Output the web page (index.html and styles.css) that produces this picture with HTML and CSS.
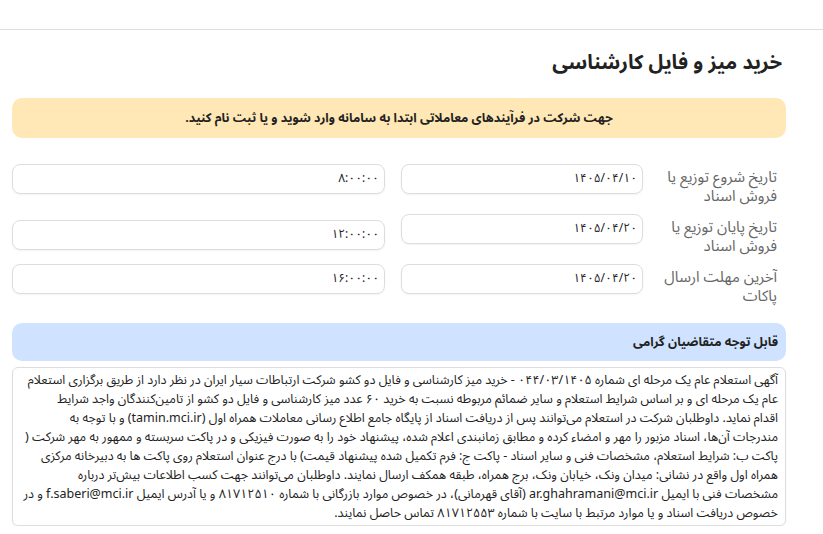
FILE: index.html
```html
<!DOCTYPE html>
<html lang="fa" dir="rtl">
<head>
    <meta charset="UTF-8">
    <meta name="viewport" content="width=device-width, initial-scale=1.0">
    <title>خرید میز و فایل کارشناسی</title>
    <link rel="stylesheet" href="styles.css">
</head>
<body>
  <div class="topbar"></div>

  <div class="page">
    <h1 class="page-title">خرید میز و فایل کارشناسی</h1>

    <div class="alert-box">جهت شرکت در فرآیندهای معاملاتی ابتدا به سامانه وارد شوید و یا ثبت نام کنید.</div>

    <div class="form-grid">
      <div class="form-row">
        <label class="field-label">تاریخ شروع توزیع یا فروش اسناد</label>
        <div class="field-box date-box">۱۴۰۵/۰۴/۱۰</div>
        <div class="field-box time-box">۸:۰۰:۰۰</div>
      </div>
      <div class="form-row">
        <label class="field-label">تاریخ پایان توزیع یا فروش اسناد</label>
        <div class="field-box date-box">۱۴۰۵/۰۴/۲۰</div>
        <div class="field-box time-box shifted">۱۲:۰۰:۰۰</div>
      </div>
      <div class="form-row">
        <label class="field-label">آخرین مهلت ارسال پاکات</label>
        <div class="field-box date-box">۱۴۰۵/۰۴/۲۰</div>
        <div class="field-box time-box">۱۶:۰۰:۰۰</div>
      </div>
    </div>

    <div class="notice-head">قابل توجه متقاضیان گرامی</div>
    <div class="notice-body">
      آگهی استعلام عام یک مرحله ای شماره ۰۴۴/۰۳/۱۴۰۵ - خرید میز کارشناسی و فایل دو کشو شرکت ارتباطات سیار ایران در نظر دارد از طریق برگزاری استعلام<br>
      عام یک مرحله ای و بر اساس شرایط استعلام و سایر ضمائم مربوطه نسبت به خرید ۶۰ عدد میز کارشناسی و فایل دو کشو از تامین‌کنندگان واجد شرایط<br>
      اقدام نماید. داوطلبان شرکت در استعلام می‌توانند پس از دریافت اسناد از پایگاه جامع اطلاع رسانی معاملات همراه اول (tamin.mci.ir) و با توجه به<br>
      مندرجات آن‌ها، اسناد مزبور را مهر و امضاء کرده و مطابق زمانبندی اعلام شده، پیشنهاد خود را به صورت فیزیکی و در پاکت سربسته و ممهور به مهر شرکت (<br>
      پاکت ب: شرایط استعلام، مشخصات فنی و سایر اسناد - پاکت ج: فرم تکمیل شده پیشنهاد قیمت) با درج عنوان استعلام روی پاکت ها به دبیرخانه مرکزی<br>
      همراه اول واقع در نشانی: میدان ونک، خیابان ونک، برج همراه، طبقه همکف ارسال نمایند. داوطلبان می‌توانند جهت کسب اطلاعات بیش‌تر درباره<br>
      مشخصات فنی با ایمیل ar.ghahramani@mci.ir (آقای قهرمانی)، در خصوص موارد بازرگانی با شماره ۸۱۷۱۲۵۱۰ و یا آدرس ایمیل f.saberi@mci.ir و در<br>
      خصوص دریافت اسناد و یا موارد مرتبط با سایت با شماره ۸۱۷۱۲۵۵۳ تماس حاصل نمایند.
    </div>
  </div>
</body>
</html>
```

FILE: styles.css
```css
body {
    margin: 0;
    padding: 0;
    background-color: #fff;
    font-family: "Noto Sans Arabic", "Noto Naskh Arabic", "DejaVu Sans", sans-serif;
    color: #222;
}
.topbar {
    height: 29px;
    border-bottom: 1px solid #ddd;
}
.page {
    width: 774px;
    margin-right: 37px;
}
.page-title {
    margin: 18px 0 0 0;
    padding-right: 4px;
    height: 50px;
    line-height: 30px;
    font-size: 20px;
    font-weight: bold;
    color: #222;
}
.alert-box {
    background-color: #ffe8b5;
    border-radius: 10px;
    height: 40px;
    line-height: 40px;
    text-align: center;
    font-size: 12.5px;
    font-weight: bold;
    color: #222;
}
.form-grid {
    margin-top: 26px;
    display: flex;
    flex-direction: column;
    gap: 8px;
}
.form-row {
    display: grid;
    grid-template-columns: 143px 258px 373px;
    align-items: start;
    height: 42px;
}
.field-label {
    padding: 4px 9px 0 12px;
    font-size: 15px;
    line-height: 19px;
    color: #666;
}
.field-box {
    height: 28px;
    line-height: 28px;
    border: 1px solid #ddd;
    border-radius: 8px;
    box-shadow: 0 1px 2px rgba(0, 0, 0, 0.05);
    padding: 0 5px;
    font-size: 12px;
    color: #222;
}
.date-box {
    margin-left: 16px;
}
.time-box.shifted {
    margin-top: 6px;
}
.notice-head {
    margin-top: 17px;
    background-color: #cfe2ff;
    border-radius: 10px;
    height: 38px;
    line-height: 38px;
    padding-right: 8px;
    font-size: 12.5px;
    font-weight: bold;
    color: #222;
}
.notice-body {
    margin-top: 6px;
    border: 1px solid #ddd;
    border-radius: 6px;
    box-shadow: 0 1px 2px rgba(0, 0, 0, 0.06);
    padding: 3px 7px 2px 7px;
    font-size: 12.5px;
    line-height: 19px;
    white-space: nowrap;
    overflow: hidden;
    color: #222;
}
```
